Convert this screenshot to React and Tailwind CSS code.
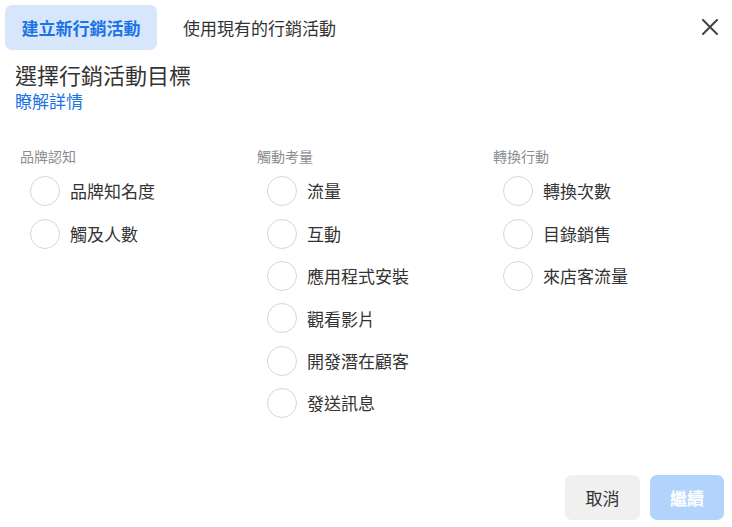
import React from "react";

const cols = [
  { title: "品牌認知", items: ["品牌知名度", "觸及人數"] },
  { title: "觸動考量", items: ["流量", "互動", "應用程式安裝", "觀看影片", "開發潛在顧客", "發送訊息"] },
  { title: "轉換行動", items: ["轉換次數", "目錄銷售", "來店客流量"] },
];

export default function App() {
  return (
    <div className="w-[732px] h-[527px] bg-white flex flex-col font-['Noto_Sans_CJK_TC','Noto_Sans',sans-serif] text-[#333]">
      <div className="flex items-start justify-between pt-[5px] pl-[5px] pr-[12px]">
        <div className="flex">
          <div className="h-[45px] w-[152px] rounded-[7px] bg-[#d7e6fb] flex items-center justify-center text-[17px] font-bold text-[#1b74e4]">
            建立新行銷活動
          </div>
          <div className="h-[45px] ml-[10px] px-4 flex items-center text-[17px] text-[#333]">
            使用現有的行銷活動
          </div>
        </div>
        <div className="mt-[12px] w-[20px] h-[20px] flex items-center justify-center">
          <svg width="16" height="16" viewBox="0 0 16 16">
            <path d="M1 1 L15 15 M15 1 L1 15" stroke="#444" strokeWidth="2" strokeLinecap="round" />
          </svg>
        </div>
      </div>
      <div className="px-[15px] mt-[10px]">
        <div className="text-[22px] leading-[28px] text-[#333]">選擇行銷活動目標</div>
        <div className="text-[17px] leading-[22px] mt-[2px] text-[#1b74e4]">瞭解詳情</div>
      </div>
      <div className="grid grid-cols-[237px_236px_236px] pl-[20px] mt-[34px]">
        {cols.map((c) => (
          <div key={c.title} className="flex flex-col">
            <div className="text-[14px] leading-[20px] text-[#8a8d91]">{c.title}</div>
            <div className="flex flex-col mt-[4px]">
              {c.items.map((it) => (
                <div key={it} className="h-[42.4px] flex items-center pl-[10px] gap-[10px]">
                  <div className="w-[30px] h-[30px] rounded-full border-[1.5px] border-[#d6d6d6] bg-white" />
                  <span className="text-[17px] text-[#333]">{it}</span>
                </div>
              ))}
            </div>
          </div>
        ))}
      </div>
      <div className="flex-1" />
      <div className="flex justify-end gap-[10px] pr-[8px] pb-[7px]">
        <div className="h-[45px] w-[75px] rounded-[7px] bg-[#f0f0f0] flex items-center justify-center text-[17px] text-[#333]">
          取消
        </div>
        <div className="h-[45px] w-[74px] rounded-[7px] bg-[#b2d4fc] flex items-center justify-center text-[17px] font-bold text-white">
          繼續
        </div>
      </div>
    </div>
  );
}
